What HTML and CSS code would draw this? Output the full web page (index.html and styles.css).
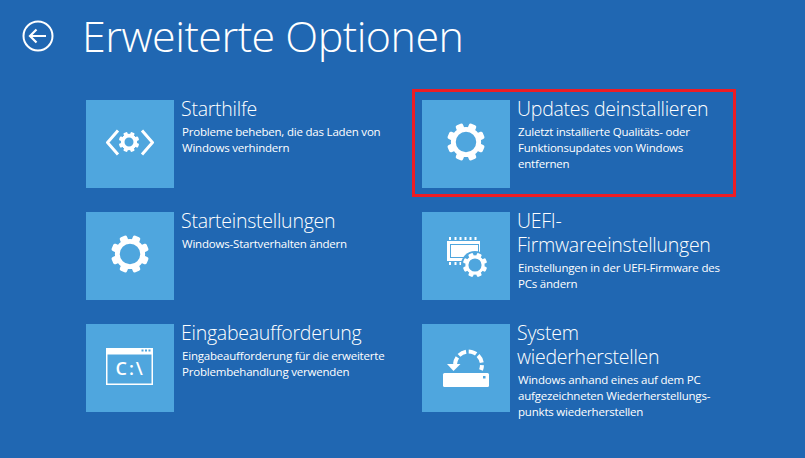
FILE: index.html
```html
<!DOCTYPE html>
<html lang="de">
<head>
<meta charset="utf-8">
<title>Erweiterte Optionen</title>
<link rel="stylesheet" href="styles.css">
</head>
<body>
<svg class="defs" width="0" height="0" aria-hidden="true">
  <defs>
    <symbol id="gear" viewBox="-20 -20 40 40">
      <circle r="13" fill="none" stroke="#fff" stroke-width="5"/>
      <g fill="#fff">
        <rect x="-4" y="-19.5" width="8" height="7" rx="2" transform="rotate(22.5)"/>
        <rect x="-4" y="-19.5" width="8" height="7" rx="2" transform="rotate(67.5)"/>
        <rect x="-4" y="-19.5" width="8" height="7" rx="2" transform="rotate(112.5)"/>
        <rect x="-4" y="-19.5" width="8" height="7" rx="2" transform="rotate(157.5)"/>
        <rect x="-4" y="-19.5" width="8" height="7" rx="2" transform="rotate(202.5)"/>
        <rect x="-4" y="-19.5" width="8" height="7" rx="2" transform="rotate(247.5)"/>
        <rect x="-4" y="-19.5" width="8" height="7" rx="2" transform="rotate(292.5)"/>
        <rect x="-4" y="-19.5" width="8" height="7" rx="2" transform="rotate(337.5)"/>
      </g>
    </symbol>
  </defs>
</svg>
<header class="top">
  <svg class="back" viewBox="0 0 32 32" width="32" height="32" aria-hidden="true">
    <circle cx="16" cy="16" r="14.5" fill="none" stroke="#fff" stroke-width="2"/>
    <path d="M24 16H8M14.500 9.500L8 16L14.500 22.500" fill="none" stroke="#fff" stroke-width="2.200"/>
  </svg>
  <h1 class="title">Erweiterte Optionen</h1>
</header>
<main class="grid">
  <section class="card">
    <div class="tile">
      <svg class="icon" viewBox="0 0 48 48" width="48" height="48" aria-hidden="true">
        <path d="M12 10.500L1.500 22.500L12 34.500M36 10.500L46.500 22.500L36 34.500" fill="none" stroke="#fff" stroke-width="3"/>
        <use href="#gear" x="12.500" y="11.500" width="21" height="21"/>
        <circle cx="23" cy="22" r="6.300" fill="none" stroke="#fff" stroke-width="3.600"/>
      </svg>
    </div>
    <div class="text">
      <h2 class="name">Starthilfe</h2>
      <p class="desc">Probleme beheben, die das Laden von<br>Windows verhindern</p>
    </div>
  </section>
  <section class="card card-marked">
    <div class="tile">
      <svg class="icon" viewBox="0 0 48 48" width="48" height="48" aria-hidden="true">
        <use href="#gear" x="4.500" y="2.500" width="39" height="39"/>
      </svg>
    </div>
    <div class="text">
      <h2 class="name">Updates deinstallieren</h2>
      <p class="desc">Zuletzt installierte Qualitäts- oder<br>Funktionsupdates von Windows<br>entfernen</p>
    </div>
  </section>
  <section class="card">
    <div class="tile">
      <svg class="icon" viewBox="0 0 48 48" width="48" height="48" aria-hidden="true">
        <use href="#gear" x="4.500" y="2.500" width="39" height="39"/>
      </svg>
    </div>
    <div class="text">
      <h2 class="name">Starteinstellungen</h2>
      <p class="desc">Windows-Startverhalten ändern</p>
    </div>
  </section>
  <section class="card">
    <div class="tile">
      <svg class="icon" viewBox="0 0 48 48" width="48" height="48" aria-hidden="true">
        <g fill="#fff">
          <rect x="7" y="5" width="2" height="3"/><rect x="12.500" y="5" width="2" height="3"/><rect x="17.500" y="5" width="2" height="3"/><rect x="22.500" y="5" width="2" height="3"/><rect x="27.500" y="5" width="2" height="3"/><rect x="32.500" y="5" width="2" height="3"/>
          <rect x="7" y="30" width="2" height="3"/><rect x="12.500" y="30" width="2" height="3"/><rect x="17.500" y="30" width="2" height="3"/>
          <rect x="5" y="9" width="33" height="20"/>
        </g>
        <rect x="8.500" y="12.500" width="28" height="13" fill="none" stroke="#4fa6de"/>
        <circle cx="33" cy="33" r="14" fill="#4fa6de"/>
        <use href="#gear" x="20.500" y="20.500" width="25" height="25"/>
      </svg>
    </div>
    <div class="text">
      <h2 class="name">UEFI-<br>Firmwareeinstellungen</h2>
      <p class="desc">Einstellungen in der UEFI-Firmware des<br>PCs ändern</p>
    </div>
  </section>
  <section class="card">
    <div class="tile">
      <svg class="icon" viewBox="0 0 48 48" width="48" height="48" aria-hidden="true">
        <path fill-rule="evenodd" d="M0 4H47V41H0ZM1.500 10.500V39.500H45.500V10.500Z" fill="#fff"/>
        <rect x="35.500" y="5.500" width="2" height="2" fill="#4fa6de"/>
        <rect x="39" y="5.500" width="2" height="2" fill="#4fa6de"/>
        <rect x="42.500" y="5.500" width="2" height="2" fill="#4fa6de"/>
        <text class="prompt" x="9.500" y="31">C:\</text>
      </svg>
    </div>
    <div class="text">
      <h2 class="name">Eingabeaufforderung</h2>
      <p class="desc">Eingabeaufforderung für die erweiterte<br>Problembehandlung verwenden</p>
    </div>
  </section>
  <section class="card">
    <div class="tile">
      <svg class="icon" viewBox="0 0 48 48" width="48" height="48" aria-hidden="true">
        <path d="M39 26A13.500 13.500 0 1 0 13 20" fill="none" stroke="#fff" stroke-width="4" stroke-dasharray="5 2.500 8 2.500 8 2.500 8 2.500 8"/>
        <path d="M5 20H18.500L11.500 27Z" fill="#fff"/>
        <rect x="1" y="29" width="46" height="14" rx="1.500" fill="#fff"/>
        <rect x="41" y="32" width="2.500" height="2.500" fill="#4fa6de"/>
      </svg>
    </div>
    <div class="text">
      <h2 class="name">System<br>wiederherstellen</h2>
      <p class="desc">Windows anhand eines auf dem PC<br>aufgezeichneten Wiederherstellungs-<br>punkts wiederherstellen</p>
    </div>
  </section>
</main>
</body>
</html>
```
FILE: styles.css
```css
html, body {
  height: 100%;
}
body {
  margin: 0;
  overflow: hidden;
  background: #2067b2;
  color: #fff;
  font-family: "Open Sans", "Noto Sans", sans-serif;
}
.defs {
  display: block;
  height: 0;
}
.top {
  display: flex;
  align-items: center;
  height: 72px;
  padding: 0 0 0 22px;
}
.back {
  flex: none;
  margin-right: 28px;
}
.title {
  margin: 0;
  font-size: 43px;
  font-weight: 300;
  letter-spacing: -0.5px;
  line-height: 72px;
  white-space: nowrap;
}
.grid {
  display: grid;
  grid-template-columns: 336px 336px;
  grid-auto-rows: 88px;
  row-gap: 24px;
  padding: 28px 0 0 86px;
}
.card {
  position: relative;
  display: flex;
  gap: 7px;
}
.card-marked::after {
  content: "";
  position: absolute;
  left: -10px;
  top: -11px;
  width: 318px;
  height: 102px;
  border: 3px solid #ed1c24;
}
.tile {
  flex: none;
  display: flex;
  align-items: center;
  justify-content: center;
  width: 88px;
  height: 88px;
  background: #4fa6de;
}
.text {
  min-width: 0;
}
.name {
  margin: -3.5px 0 0;
  font-size: 19.5px;
  font-weight: 300;
  letter-spacing: -0.25px;
  line-height: 24.5px;
  white-space: nowrap;
}
.desc {
  margin: 2.5px 0 0 1px;
  font-size: 11.5px;
  letter-spacing: -0.2px;
  line-height: 16px;
  white-space: nowrap;
}
.prompt {
  fill: #fff;
  font-family: "Open Sans", sans-serif;
  font-size: 18px;
  font-weight: 600;
  letter-spacing: 2px;
}
```
